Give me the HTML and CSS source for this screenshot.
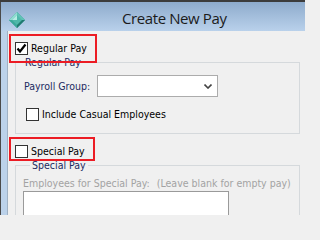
FILE: index.html
```html
<!DOCTYPE html>
<html>
<head>
<meta charset="utf-8">
<link rel="stylesheet" href="styles.css">
</head>
<body>
<div class="window">
  <div class="titlebar">
    <svg class="app-icon" width="16" height="16" viewBox="0 0 16 16">
      <polygon points="8,0 16,8 8,16 0,8" fill="#2f9c8f"/>
      <polygon points="8,0 0,8 8,8" fill="#8fdcd0"/>
      <polygon points="8,0 16,8 8,8" fill="#5fc2b5"/>
      <polygon points="0,8 8,16 8,8" fill="#3aa89a"/>
      <polygon points="16,8 8,16 8,8" fill="#217a70"/>
      <polygon points="8,3 13,8 8,13 3,8" fill="#4fb8aa"/>
      <polygon points="8,3 3,8 8,8" fill="#b5ece4"/>
    </svg>
    <span class="title">Create New Pay</span>
  </div>
  <div class="frame">
    <div class="frame-left"></div>
    <div class="client">
      <div class="check-row top-row">
        <span class="cb">
          <svg width="11" height="11" viewBox="0 0 11 11"><path d="M1.5 5.5 L4 8.5 L9.5 1.5" fill="none" stroke="#000" stroke-width="2.2"/></svg>
        </span>
        <span class="cb-label">Regular Pay</span>
      </div>
      <fieldset class="group group-regular">
        <legend>Regular Pay</legend>
        <div class="field-row">
          <span class="field-label">Payroll Group:</span>
          <div class="combo">
            <svg width="8" height="5" viewBox="0 0 8 5"><path d="M0.5 0.5 L4 4 L7.5 0.5" fill="none" stroke="#444" stroke-width="1.6"/></svg>
          </div>
        </div>
        <div class="check-row inner-row">
          <span class="cb"></span>
          <span class="cb-label">Include Casual Employees</span>
        </div>
      </fieldset>
      <div class="check-row special-row">
        <span class="cb"></span>
        <span class="cb-label">Special Pay</span>
      </div>
      <fieldset class="group group-special">
        <legend>Special Pay</legend>
        <div class="hint"><span>Employees for Special Pay:</span><span class="hint-note">(Leave blank for empty pay)</span></div>
        <div class="listbox"></div>
      </fieldset>
      <div class="annot annot-regular"></div>
      <div class="annot annot-special"></div>
    </div>
  </div>
</div>
</body>
</html>
```

FILE: styles.css
```css
html, body {
  margin: 0;
  padding: 0;
  width: 305px;
  height: 215px;
  overflow: hidden;
  background: #f0f0f0;
}

.window {
  width: 305px;
  height: 215px;
  display: flex;
  flex-direction: column;
  border-top: 2px solid #3c3c3c;
  box-sizing: border-box;
  overflow: hidden;
  font-family: "DejaVu Sans Condensed", "DejaVu Sans", sans-serif;
  font-size: 10.5px;
}

.titlebar {
  height: 29px;
  flex: none;
  display: flex;
  align-items: flex-start;
  border-left: 1px solid #4a4a4a;
  background: linear-gradient(to bottom, #8eabcc, #b9d1eb);
}

.app-icon {
  display: block;
  margin-left: 8px;
  margin-top: 10px;
  flex: none;
}

.title {
  align-self: center;
  margin-left: 97px;
  margin-top: 2px;
  font-family: "Open Sans", sans-serif;
  font-size: 15px;
  letter-spacing: -0.4px;
  color: #1b1b1b;
}

.frame {
  flex: 1;
  display: flex;
  min-height: 0;
}

.frame-left {
  width: 6px;
  flex: none;
  border-left: 1px solid #4a4a4a;
  border-right: 1px solid #9fb1c4;
  background: #bcd2ea;
}

.client {
  flex: 1;
  position: relative;
  background: #f0f0f0;
  padding: 0 5px 0 7px;
}

.check-row {
  display: flex;
  align-items: center;
  height: 13px;
}

.top-row {
  margin-top: 11px;
}

.cb {
  width: 13px;
  height: 13px;
  box-sizing: border-box;
  border: 1px solid #333;
  background: #fff;
  display: flex;
  align-items: center;
  justify-content: center;
  flex: none;
}

.cb-label {
  margin-left: 3px;
  color: #000;
  line-height: 13px;
}

.group {
  margin: 2px 0 0 0;
  border: 1px solid #d5d9dc;
  padding: 7px 0 12px 0;
  min-width: 0;
}

.group legend {
  margin-left: 7px;
  padding: 0 2px;
  line-height: 11px;
  color: #1c2a60;
}

.field-row {
  display: flex;
  align-items: center;
  padding-left: 8px;
}

.field-label {
  width: 73px;
  color: #1c2a60;
}

.combo {
  width: 121px;
  height: 22px;
  box-sizing: border-box;
  border: 1px solid #acacac;
  background: #fff;
  display: flex;
  align-items: center;
  justify-content: flex-end;
  padding-right: 5px;
}

.inner-row {
  margin-top: 11px;
  padding-left: 10px;
}

.special-row {
  margin-top: 11px;
}

.group-special {
  padding: 6px 0 0 7px;
}

.hint {
  color: #a3a3a3;
  line-height: 12px;
  white-space: nowrap;
}

.hint-note {
  margin-left: 7px;
}

.listbox {
  margin-top: 2px;
  width: 206px;
  height: 40px;
  box-sizing: border-box;
  border: 1px solid #9a9a9a;
  background: #fff;
}

.annot {
  position: absolute;
  left: 1px;
  border: 2px solid #ec1c24;
  box-sizing: border-box;
  pointer-events: none;
}

.annot-regular {
  top: 3px;
  width: 88px;
  height: 29px;
}

.annot-special {
  top: 106px;
  width: 86px;
  height: 24px;
}
```
